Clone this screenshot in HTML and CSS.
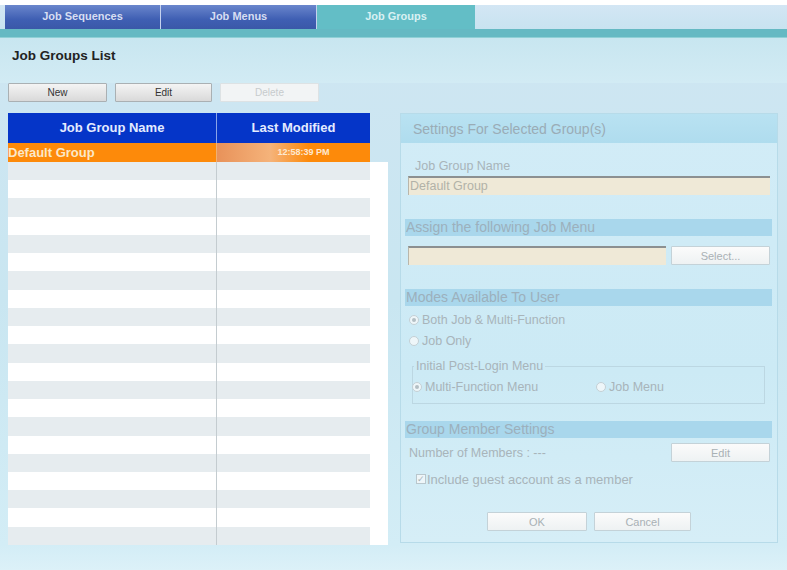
FILE: index.html
```html
<!DOCTYPE html>
<html lang="en">
<head>
  <meta charset="UTF-8" />
  <title>Job Groups</title>
  <link rel="stylesheet" href="styles.css">
</head>
<body>
  <div class="tabs">
    <div class="tab">Job Sequences</div>
    <div class="tab">Job Menus</div>
    <div class="tab active">Job Groups</div>
  </div>
  <div class="tabline"></div>

  <h1 class="title">Job Groups List</h1>

  <div class="toolbar">
    <button class="btn">New</button>
    <button class="btn">Edit</button>
    <button class="btn off">Delete</button>
  </div>

  <div class="main">
    <div class="list">
      <div class="head">
        <div class="c1">Job Group Name</div>
        <div class="c2">Last Modified</div>
      </div>
      <div class="row sel">
        <div class="c1">Default Group</div>
        <div class="c2"><span class="time">12:58:39 PM</span></div>
      </div>
      <div class="rows" id="rows"></div>
    </div>

    <div class="panel">
      <div class="panel-title">Settings For Selected Group(s)</div>

      <div class="label">Job Group Name</div>
      <div class="input name">Default Group</div>

      <div class="bar">Assign the following Job Menu</div>
      <div class="line">
        <div class="input grow"></div>
        <button class="btn pale">Select...</button>
      </div>

      <div class="bar">Modes Available To User</div>
      <div class="opt first"><span class="radio on"></span>Both Job &amp; Multi-Function</div>
      <div class="opt"><span class="radio"></span>Job Only</div>

      <fieldset class="box">
        <legend>Initial Post-Login Menu</legend>
        <div class="opt-pair">
          <div class="opt-in wide"><span class="radio on"></span>Multi-Function Menu</div>
          <div class="opt-in"><span class="radio"></span>Job Menu</div>
        </div>
      </fieldset>

      <div class="bar low">Group Member Settings</div>
      <div class="line members">
        <div class="count">Number of Members : ---</div>
        <button class="btn pale">Edit</button>
      </div>
      <div class="check"><span class="cbox">&#10003;</span>Include guest account as a member</div>

      <div class="actions">
        <button class="btn pale">OK</button>
        <button class="btn pale">Cancel</button>
      </div>
    </div>
  </div>

  <script>
    const rows = document.getElementById('rows');
    for (let i = 0; i < 21; i++) {
      rows.innerHTML += `<div class="row ${i % 2 === 0 ? 'alt' : ''}"><div class="c1"></div><div class="c2"></div></div>`;
    }
  </script>
</body>
</html>
```

FILE: styles.css
```css
* {
  box-sizing: border-box;
}
body {
  margin: 0;
  width: 787px;
  height: 570px;
  overflow: hidden;
  font-family: 'Liberation Sans', Arial, sans-serif;
  background: linear-gradient(to bottom, #ffffff 0, #ffffff 5px, #cfe6f2 5px, #c9e6f1 300px, #d3edf6 545px, #dcf1f8 570px);
}

/* tabs */
.tabs {
  display: flex;
  height: 29px;
  padding: 5px 0 0 5px;
  background: linear-gradient(to bottom, #ffffff 0, #ffffff 5px, #d3e6f4 5px, #c8e3f0 29px);
}
.tab {
  width: 156px;
  height: 24px;
  line-height: 22px;
  text-align: center;
  font-size: 11px;
  font-weight: bold;
  color: #d7def2;
  background: linear-gradient(to bottom, #6a86cc, #3f5fb3 60%, #3a58a8);
  border-right: 1px solid #c5d2ee;
}
.tab.active {
  width: 158px;
  color: #d9f1f3;
  background: #63bec6;
  border-right: none;
}
.tabline {
  height: 9px;
  background: #65b9c3;
  border-bottom: 1px solid #8fd0d6;
}

.title {
  margin: 0;
  padding: 10px 0 0 12px;
  height: 45px;
  font-size: 13.5px;
  font-weight: bold;
  color: #222;
  background: linear-gradient(to bottom, #c8e6f0, #d2ebf4);
}

/* buttons */
.toolbar {
  display: flex;
  gap: 8px;
  padding-left: 8px;
  height: 30px;
}
.btn {
  width: 99px;
  height: 19px;
  padding: 0;
  font-family: 'Liberation Sans', Arial, sans-serif;
  font-size: 10px;
  color: #333;
  background: linear-gradient(to bottom, #f4f4f4, #d9d9d9);
  border: 1px solid #aab0b3;
  border-radius: 1px;
  cursor: pointer;
}
.toolbar .btn:nth-child(2) {
  width: 97px;
}
.btn.off {
  color: #c7cbcd;
  background: #f2f4f5;
  border-color: #dde2e4;
}
.btn.pale {
  font-size: 11px;
  color: #a9b1b5;
  background: linear-gradient(to bottom, #fbfbfb, #eef2f3);
  border: 1px solid #c4d2d8;
}

/* list */
.main {
  display: flex;
  gap: 12px;
  padding-left: 8px;
}
.list {
  width: 380px;
}
.head, .row {
  display: flex;
}
.head {
  height: 30px;
  width: 362px;
  background: #0535c8;
  color: #e4ebff;
  font-size: 13px;
  font-weight: bold;
}
.head .c1, .head .c2 {
  line-height: 30px;
  text-align: center;
}
.c1 {
  width: 209px;
  border-right: 1px solid #b8c0c5;
}
.c2 {
  width: 153px;
}
.head .c1 {
  border-right: 1px solid #8aa4e8;
}
.row.sel {
  height: 19px;
  width: 362px;
  background: #fd8a0a;
  color: #fbe8c8;
  font-size: 13px;
  font-weight: bold;
}
.row.sel .c1 {
  line-height: 19px;
  border-right: 1px solid #f0b070;
}
.row.sel .c2 {
  line-height: 19px;
  text-align: center;
  font-size: 9px;
  color: #fde9d0;
  background: linear-gradient(to right, #e8925a 0, #f5b37a 35%, #fd8a0a 60%);
}
.time {
  padding-left: 20px;
}
.rows {
  padding-right: 18px;
  background: #ffffff;
}
.row {
  height: 18.24px;
  background: #ffffff;
}
.row.alt {
  background: #e6ecef;
}
.row .c1 {
  border-right: 1px solid #c4ccd0;
}

/* settings panel */
.panel {
  width: 378px;
  height: 430px;
  background: linear-gradient(to bottom, #d2ecf7, #cceaf5 60%, #d6eef7);
  border: 1px solid #b7dbe9;
  font-size: 12.5px;
  color: #a8b4ba;
}
.panel-title {
  height: 29px;
  line-height: 30px;
  padding-left: 12px;
  background: linear-gradient(to bottom, #b9e2f2, #afdcee);
  color: #9aacb6;
  font-size: 14px;
}
.label {
  margin-top: 16px;
  height: 14px;
  line-height: 14px;
  padding-left: 14px;
}
.input {
  height: 19px;
  line-height: 17px;
  padding-left: 1px;
  background: #efe9d7;
  border-top: 2px solid #8c9091;
  border-left: 1px solid #b9b6ab;
  color: #b2b2a8;
}
.input.name {
  margin: 3px 7px 0 7px;
}
.bar {
  margin: 24px 5px 0 4px;
  height: 17px;
  line-height: 17px;
  padding-left: 1px;
  background: #a9d7ec;
  color: #9cb0bc;
  font-size: 14px;
}
.line {
  display: flex;
  gap: 5px;
  margin: 10px 7px 0 7px;
}
.grow {
  flex: 1;
}
.opt {
  margin-top: 7px;
  height: 14px;
  line-height: 14px;
  padding-left: 8px;
  display: flex;
  align-items: center;
}
.radio {
  width: 10px;
  height: 10px;
  flex: none;
  border: 1px solid #c4d0d5;
  border-radius: 50%;
  background: #eef6f9;
  margin-right: 3px;
  position: relative;
}
.radio.on::after {
  content: '';
  position: absolute;
  left: 2px;
  top: 2px;
  width: 4px;
  height: 4px;
  border-radius: 50%;
  background: #b3bfc4;
}
.box {
  margin: 12px 12px 0 11px;
  min-width: 0;
  height: 44px;
  padding: 8px 0 0 0;
  border: 1px solid #bcd7e2;
}
.box legend {
  padding: 0 2px;
  margin-left: 1px;
  font-size: 12.5px;
  line-height: 12px;
}
.opt-pair {
  display: flex;
  margin-left: -1px;
}
.opt-in {
  display: flex;
  align-items: center;
}
.opt-in.wide {
  width: 184px;
}
.bar.low {
  margin-top: 17px;
}
.members {
  margin: 5px 7px 0 8px;
  align-items: center;
}
.count {
  flex: 1;
}
.check {
  display: flex;
  align-items: center;
  margin: 10px 0 0 15px;
  height: 14px;
  font-size: 13px;
}
.cbox {
  width: 10px;
  height: 10px;
  border: 1px solid #b9c7cd;
  background: #eef6f9;
  font-size: 9px;
  line-height: 8px;
  text-align: center;
  margin-right: 1px;
}
.actions {
  display: flex;
  justify-content: center;
  gap: 7px;
  margin-top: 26px;
}
.actions .btn {
  width: 100px;
}
.actions .btn + .btn {
  width: 97px;
}
```
